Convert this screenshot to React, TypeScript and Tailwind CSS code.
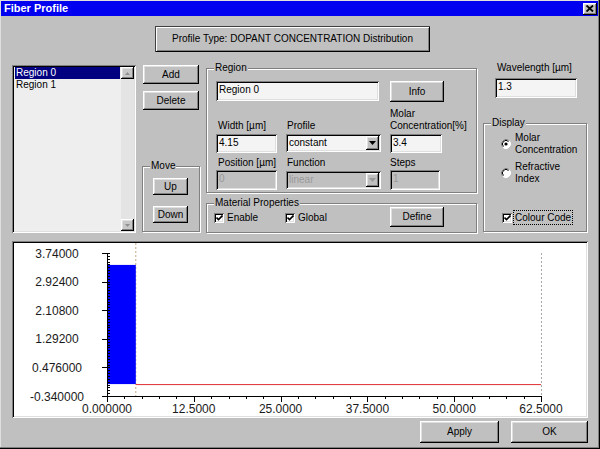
import React from "react";

// Win95 style bevels
const raised =
  "shadow-[inset_-1px_-1px_0_#000,inset_1px_1px_0_#fff,inset_-2px_-2px_0_#808080,inset_2px_2px_0_#dfdfdf]";
const sunken =
  "shadow-[inset_1px_1px_0_#808080,inset_-1px_-1px_0_#fff,inset_2px_2px_0_#000,inset_-2px_-2px_0_#dfdfdf]";

const Button = ({ label, className = "" }: { label: string; className?: string }) => (
  <div className={`${raised} bg-[#c0c0c0] flex items-center justify-center leading-[12px] ${className}`}>
    {label}
  </div>
);

const Edit = ({
  value,
  className = "",
  disabled = false,
}: {
  value: string;
  className?: string;
  disabled?: boolean;
}) => (
  <div
    className={`${sunken} ${
      disabled ? "bg-[#c0c0c0] text-[#9a9a9a]" : "bg-[#f4f4f4]"
    } pl-[3px] pt-[3px] leading-[12px] ${className}`}
  >
    {value}
  </div>
);

const Combo = ({ value, disabled = false }: { value: string; disabled?: boolean }) => (
  <div
    className={`${sunken} ${
      disabled ? "bg-[#c0c0c0] text-[#9a9a9a]" : "bg-[#f4f4f4]"
    } h-[18px] w-[95px] mt-[1px] flex items-start justify-between pl-[3px] pr-[2px] pt-[2px]`}
  >
    <span className="leading-[12px] pt-[1px]">{value}</span>
    <div className={`${raised} bg-[#c0c0c0] w-[13px] h-[14px] flex items-center justify-center`}>
      <svg width="7" height="4" viewBox="0 0 7 4">
        <path d="M0 0h7L3.5 4z" fill={disabled ? "#9a9a9a" : "#000"} />
      </svg>
    </div>
  </div>
);

const Check = () => (
  <div className={`${sunken} bg-white w-[10px] h-[10px] flex items-center justify-center shrink-0`}>
    <svg width="7" height="6" viewBox="0 0 7 6">
      <path d="M0.5 2.5L2.5 4.5L6.5 0.5" stroke="#000" strokeWidth="1.6" fill="none" />
    </svg>
  </div>
);

const Radio = ({ checked }: { checked: boolean }) => (
  <svg width="10" height="10" viewBox="0 0 10 10" className="shrink-0">
    <circle cx="5" cy="5" r="4.5" fill="#fff" />
    <path d="M1.82 8.18A4.5 4.5 0 0 1 8.18 1.82" stroke="#808080" fill="none" />
    <path d="M8.18 1.82A4.5 4.5 0 0 1 1.82 8.18" stroke="#fff" fill="none" />
    <path d="M2.5 7.5A3.5 3.5 0 0 1 7.5 2.5" stroke="#000" fill="none" />
    {checked && <circle cx="5" cy="5" r="1.6" fill="#000" />}
  </svg>
);

const Group = ({
  label,
  className = "",
  children,
}: {
  label: string;
  className?: string;
  children?: React.ReactNode;
}) => (
  <div className={`relative border border-[#808080] shadow-[inset_1px_1px_0_#fff,1px_1px_0_#fff] ${className}`}>
    <span className="absolute -top-[7px] left-[7px] bg-[#c0c0c0] px-[1px] leading-[12px]">{label}</span>
    {children}
  </div>
);

// chart helpers, svg coords start at page (14, 243)
const Y0 = 10;
const Y1 = 153;
const X0 = 93;
const X1 = 527;
const yFor = (v: number) => Y1 - ((v + 0.34) / 4.08) * (Y1 - Y0);
const xFor = (v: number) => X0 + (v / 62.5) * (X1 - X0);

const yLabels = [
  { v: 3.74, t: "3.74000" },
  { v: 2.924, t: "2.92400" },
  { v: 2.108, t: "2.10800" },
  { v: 1.292, t: "1.29200" },
  { v: 0.476, t: "0.476000" },
  { v: -0.34, t: "-0.340000" },
];
const xLabels = [
  { v: 0, t: "0.000000" },
  { v: 12.5, t: "12.5000" },
  { v: 25, t: "25.0000" },
  { v: 37.5, t: "37.5000" },
  { v: 50, t: "50.0000" },
  { v: 62.5, t: "62.5000" },
];

const Chart = () => {
  const yMinor = Array.from({ length: 51 }, (_, i) => Y0 + (i * (Y1 - Y0)) / 50);
  const xMinor = Array.from({ length: 26 }, (_, i) => X0 + (i * (X1 - X0)) / 25);
  return (
    <svg width="572" height="173" viewBox="0 0 572 173" className="block m-[2px]">
      {/* dashed region borders */}
      <line x1={xFor(4.15)} y1="0" x2={xFor(4.15)} y2="156" stroke="#c8a880" strokeDasharray="2 2" />
      <line x1={X1 + 0.5} y1={Y0} x2={X1 + 0.5} y2="156" stroke="#a8a8a8" strokeDasharray="2 2" />
      {/* bar */}
      <rect x={X0} y={yFor(3.4)} width={xFor(4.15) - X0} height={yFor(0) - yFor(3.4)} fill="#0000ff" />
      <line x1={xFor(4.15)} y1={yFor(0) + 0.5} x2={X1} y2={yFor(0) + 0.5} stroke="#e03030" />
      {/* axes */}
      <line x1={X0 + 0.5} y1={Y0} x2={X0 + 0.5} y2={Y1} stroke="#000" />
      <line x1={X0} y1={Y1 + 0.5} x2={X1 + 1} y2={Y1 + 0.5} stroke="#000" />
      {yMinor.map((y, i) => (
        <line key={`ym${i}`} x1={X0} y1={Math.round(y) + 0.5} x2={X0 + 3} y2={Math.round(y) + 0.5} stroke="#000" />
      ))}
      {xMinor.map((x, i) => (
        <line
          key={`xm${i}`}
          x1={Math.round(x) + 0.5}
          y1={Y1}
          x2={Math.round(x) + 0.5}
          y2={i % 5 === 0 ? Y1 + 6 : Y1 + 3}
          stroke="#000"
        />
      ))}
      {yLabels.map((l) => (
        <g key={l.t}>
          <line x1={X0 - 5} y1={Math.round(yFor(l.v)) + 0.5} x2={X0} y2={Math.round(yFor(l.v)) + 0.5} stroke="#000" />
          <text
            x="43"
            y={yFor(l.v) + 4.5}
            textAnchor="middle"
            fontFamily="'Liberation Sans', Arial, sans-serif"
            fontSize="12"
            fill="#1a1a1a"
          >
            {l.t}
          </text>
        </g>
      ))}
      {xLabels.map((l) => (
        <text
          key={l.t}
          x={xFor(l.v)}
          y="169.5"
          textAnchor="middle"
          fontFamily="'Liberation Sans', Arial, sans-serif"
          fontSize="12"
          fill="#1a1a1a"
        >
          {l.t}
        </text>
      ))}
    </svg>
  );
};

export default function App() {
  return (
    <div className="w-[600px] h-[449px] bg-[#c0c0c0] font-['Liberation_Sans',Arial,sans-serif] text-[10px] text-black pl-[1px] pt-[1px] pr-[2px] pb-[2px] shadow-[inset_-1px_-1px_0_#000,inset_-2px_-2px_0_#808080,inset_1px_1px_0_#dfdfdf] flex flex-col overflow-hidden">
      {/* title bar */}
      <div className="h-[15px] bg-[#0000f0] flex items-center justify-between pl-[3px] pr-[1px] shrink-0">
        <span className="text-white font-bold text-[11px] leading-[13px]">Fiber Profile</span>
        <div className={`${raised} bg-[#c0c0c0] w-[14px] h-[12px] flex items-center justify-center`}>
          <svg width="8" height="7" viewBox="0 0 8 7">
            <path d="M0.5 0.5L7 6.5M7 0.5L0.5 6.5" stroke="#000" strokeWidth="1.8" />
          </svg>
        </div>
      </div>

      {/* profile type */}
      <div className="mt-[10px] ml-[154px] w-[275px] h-[26px] bg-[#c0c0c0] shadow-[inset_1px_1px_0_#404040,inset_-1px_-1px_0_#000,inset_2px_2px_0_#fff,inset_-2px_-2px_0_#808080] flex items-center justify-center leading-[12px] shrink-0">
        Profile Type: DOPANT CONCENTRATION Distribution
      </div>

      {/* main controls */}
      <div className="mt-[10px] flex items-start shrink-0">
        {/* region list */}
        <div className={`${sunken} ml-[11px] mt-[3px] w-[124px] h-[168px] bg-[#eeeeee] flex p-[2px]`}>
          <div className="flex-1 flex flex-col leading-[12px]">
            <div className="mx-[1px] bg-[#000080] text-white pl-[1px]">Region 0</div>
            <div className="mx-[1px] pl-[1px]">Region 1</div>
          </div>
          <div className="w-[13px] flex flex-col bg-[#e4e4e4]">
            <div className={`${raised} bg-[#c8c8c8] h-[12px] flex items-center justify-center`}>
              <svg width="5" height="3" viewBox="0 0 5 3">
                <path d="M0 3h5L2.5 0z" fill="#909090" />
              </svg>
            </div>
            <div className="flex-1" />
            <div className={`${raised} bg-[#c8c8c8] h-[12px] flex items-center justify-center`}>
              <svg width="5" height="3" viewBox="0 0 5 3">
                <path d="M0 0h5L2.5 3z" fill="#909090" />
              </svg>
            </div>
          </div>
        </div>

        {/* add / delete / move */}
        <div className="ml-[6px] mt-[3px] w-[58px] flex flex-col">
          <Button label="Add" className="ml-[1px] w-[56px] h-[19px]" />
          <Button label="Delete" className="ml-[1px] mt-[7px] w-[56px] h-[19px]" />
          <Group label="Move" className="mt-[56px] h-[66px] pl-[10px] pt-[11px]">
            <Button label="Up" className="w-[35px] h-[17px]" />
            <Button label="Down" className="mt-[11px] w-[35px] h-[17px]" />
          </Group>
        </div>

        {/* region + material */}
        <div className="ml-[6px] mt-[6px] w-[271px] flex flex-col">
          <Group label="Region" className="h-[125px] pl-[9px] pt-[12px]">
            <div className="flex items-start">
              <Edit value="Region 0" className="w-[163px] h-[20px]" />
              <Button label="Info" className="ml-[11px] w-[54px] h-[21px]" />
            </div>
            <div className="grid grid-cols-[61px_95px_52px] gap-x-[9px] mt-[6px] leading-[12px]">
              <div className="h-[24px] flex items-end pl-[2px]">Width [µm]</div>
              <div className="h-[24px] flex items-end pl-[1px] pb-[0px]">Profile</div>
              <div className="h-[24px] flex flex-col justify-end whitespace-nowrap">
                <span>Molar</span>
                <span>Concentration[%]</span>
              </div>
              <Edit value="4.15" className="mt-[2px] h-[19px]" />
              <div className="mt-[1px]">
                <Combo value="constant" />
              </div>
              <Edit value="3.4" className="mt-[2px] h-[19px]" />
              <div className="mt-[4px] h-[12px] pl-[2px] whitespace-nowrap">Position [µm]</div>
              <div className="mt-[4px] h-[12px] pl-[1px]">Function</div>
              <div className="mt-[4px] h-[12px]">Steps</div>
              <Edit value="0" disabled className="mt-[1px] h-[20px]" />
              <div className="mt-[1px]">
                <Combo value="linear" disabled />
              </div>
              <Edit value="1" disabled className="mt-[1px] h-[20px] w-[50px]" />
            </div>
          </Group>
          <Group label="Material Properties" className="mt-[10px] h-[30px] pl-[7px] flex items-center">
            <div className="w-[71px] flex items-center gap-[3px] leading-[12px]">
              <Check />
              <span>Enable</span>
            </div>
            <div className="w-[105px] flex items-center gap-[3px] leading-[12px]">
              <Check />
              <span>Global</span>
            </div>
            <Button label="Define" className="w-[54px] h-[20px] -mt-[2px]" />
          </Group>
        </div>

        {/* wavelength + display */}
        <div className="ml-[6px] w-[104px] flex flex-col">
          <div className="pl-[14px] leading-[12px]">Wavelength [µm]</div>
          <Edit value="1.3" className="mt-[4px] ml-[12px] w-[82px] h-[20px]" />
          <Group label="Display" className="mt-[25px] h-[109px] pt-[8px] leading-[12px]">
            <div className="pl-[17px] h-[24px] flex items-center gap-[4px]">
              <Radio checked />
              <div className="flex flex-col">
                <span>Molar</span>
                <span>Concentration</span>
              </div>
            </div>
            <div className="pl-[17px] mt-[5px] h-[24px] flex items-center gap-[4px]">
              <Radio checked={false} />
              <div className="flex flex-col">
                <span>Refractive</span>
                <span>Index</span>
              </div>
            </div>
            <div className="pl-[18px] mt-[25px] flex items-center">
              <Check />
              <span className="ml-[1px] border border-dotted border-black h-[15px] px-[1px] leading-[13px]">
                Colour Code
              </span>
            </div>
          </Group>
        </div>
      </div>

      {/* chart */}
      <div className={`${sunken} mt-[8px] ml-[11px] w-[576px] h-[177px] bg-white shrink-0`}>
        <Chart />
      </div>

      {/* bottom buttons */}
      <div className="mt-[3px] flex shrink-0">
        <Button label="Apply" className="ml-[419px] w-[79px] h-[22px]" />
        <Button label="OK" className="ml-[12px] w-[77px] h-[22px]" />
      </div>
    </div>
  );
}
